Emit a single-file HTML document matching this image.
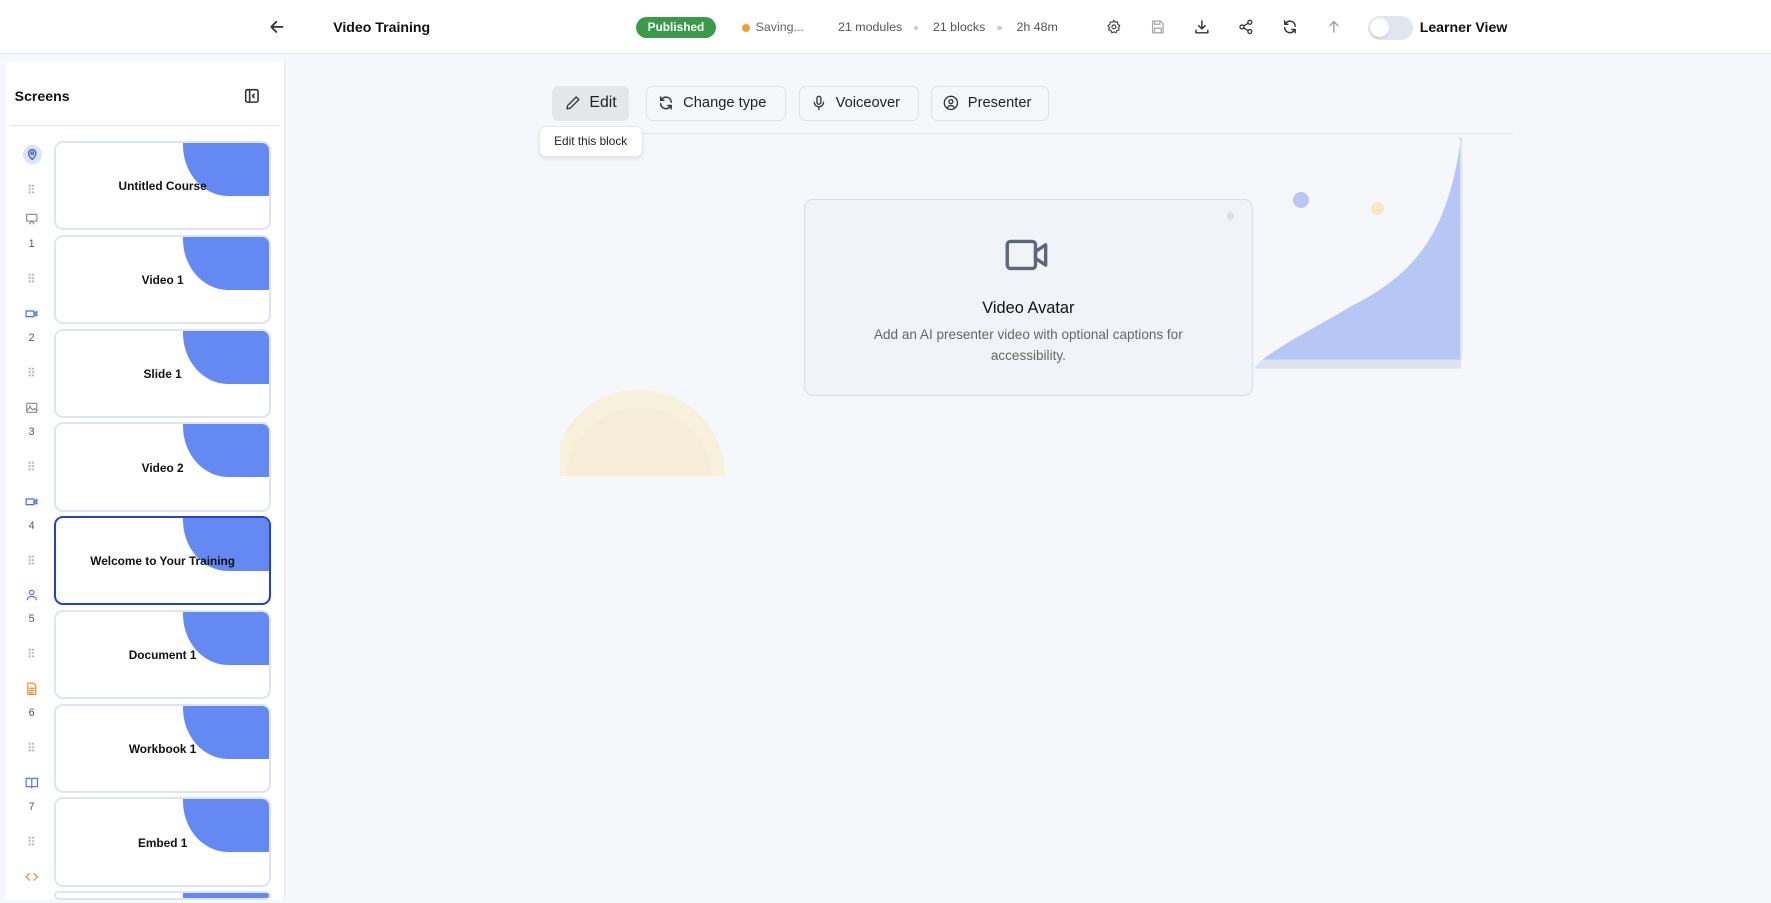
<!DOCTYPE html>
<html><head><meta charset="utf-8"><style>
*{box-sizing:border-box;margin:0;padding:0}
html,body{width:1771px;height:903px;overflow:hidden;background:#f5f7fa}
#w{position:relative;width:1568px;height:799px;overflow:hidden;zoom:1.12946;font-family:"Liberation Sans",sans-serif;color:#111;background:#f5f7fa}
.a{position:absolute}
.hdr{left:0;top:0;width:1568px;height:48px;background:#fff;border-bottom:1px solid #e3e6ec}
.t{white-space:nowrap}
.ic{fill:none;stroke-width:1.6;stroke-linecap:round;stroke-linejoin:round}
.card{left:48px;width:192px;height:79px;border:2px solid #dfe5f0;border-radius:8px;background:#fff;overflow:hidden}
.card .b{position:absolute;right:0;top:0;width:76px;height:47px;background:#6589f2;border-bottom-left-radius:40px 45px}
.card .n{position:absolute;left:0;right:0;top:32px;text-align:center;font-weight:bold;font-size:10.5px;color:#111}
.num{left:22px;width:12px;text-align:center;font-size:9.5px;color:#555}
.dots{left:25px;width:6px;height:9px;background:radial-gradient(circle,#bbb 0.9px,transparent 1.1px) 0 0/3px 3px}
.btn{top:76px;height:31px;border:1px solid #dde2ea;border-radius:6px;font-size:13px;display:flex;align-items:center;gap:8px;padding-left:10px;color:#222}
</style></head><body><div id="w">
<div class="a hdr"></div>
<svg class="a" style="left:238px;top:17px" width="14" height="14" viewBox="0 0 14 14"><path class="ic" style="stroke:#333" d="M12 7H2M6.5 2.5 2 7l4.5 4.5"/></svg>
<div class="a t" style="left:295px;top:17px;font-size:12.5px;font-weight:bold">Video Training</div>
<div class="a t" style="left:563px;top:15px;width:71px;height:19px;border-radius:10px;background:#3a9a4a;color:#fff;font-size:10.5px;font-weight:bold;text-align:center;line-height:19px">Published</div>
<div class="a" style="left:657px;top:21px;width:7px;height:7px;border-radius:50%;background:#f0a030"></div>
<div class="a t" style="left:669px;top:18px;font-size:11px;color:#666">Saving...</div>
<div class="a t" style="left:742px;top:18px;font-size:11px;color:#555">21 modules</div>
<div class="a" style="left:809px;top:23px;width:4px;height:4px;border-radius:50%;background:#ccc"></div>
<div class="a t" style="left:826px;top:18px;font-size:11px;color:#555">21 blocks</div>
<div class="a" style="left:883px;top:23px;width:4px;height:4px;border-radius:50%;background:#ccc"></div>
<div class="a t" style="left:900px;top:18px;font-size:11px;color:#555">2h 48m</div>
<svg class="a" style="left:979px;top:17px" width="14" height="14" viewBox="0 0 24 24"><path class="ic" style="stroke:#333" stroke-width="2" d="M12 2l2 3 3.5-.5.5 3.5 3 2-2 3 1 3.5-3.5 1L15 21l-3-1.5L9 21l-1.5-3.5-3.5-1 1-3.5-2-3 3-2 .5-3.5L10 5z"/><circle class="ic" style="stroke:#333" stroke-width="2" cx="12" cy="12" r="3"/></svg>
<svg class="a" style="left:1018px;top:17px" width="14" height="14" viewBox="0 0 24 24"><path class="ic" style="stroke:#aaa;stroke-width:2" d="M5 3h11l4 4v13a1 1 0 0 1-1 1H5a1 1 0 0 1-1-1V4a1 1 0 0 1 1-1zM7 3v5h8V3M7 21v-7h10v7"/></svg>
<svg class="a" style="left:1057px;top:17px" width="14" height="14" viewBox="0 0 24 24"><path class="ic" style="stroke:#333;stroke-width:2.2" d="M12 3v12M7 10l5 5 5-5M3 17v4h18v-4"/></svg>
<svg class="a" style="left:1096px;top:17px" width="14" height="14" viewBox="0 0 24 24"><g class="ic" style="stroke:#333;stroke-width:2"><circle cx="18" cy="5" r="3"/><circle cx="6" cy="12" r="3"/><circle cx="18" cy="19" r="3"/><path d="M8.6 13.5l6.8 4M15.4 6.5l-6.8 4"/></g></svg>
<svg class="a" style="left:1135px;top:17px" width="14" height="14" viewBox="0 0 24 24"><path class="ic" style="stroke:#333;stroke-width:2.2" d="M20 11a8 8 0 0 0-14-5L4 8M4 13a8 8 0 0 0 14 5l2-2M4 3v5h5M20 21v-5h-5"/></svg>
<svg class="a" style="left:1174px;top:17px" width="14" height="14" viewBox="0 0 24 24"><path class="ic" style="stroke:#999;stroke-width:2" d="M12 20V4M6 10l6-6 6 6"/></svg>
<div class="a" style="left:1211px;top:14px;width:40px;height:21px;border-radius:11px;background:#e2e6ee"></div>
<div class="a" style="left:1213px;top:16px;width:17px;height:17px;border-radius:50%;background:#fff;box-shadow:0 1px 2px rgba(0,0,0,.15)"></div>
<div class="a t" style="left:1257px;top:17px;font-size:12.5px;font-weight:bold">Learner View</div>

<div class="a" style="left:5px;top:55px;width:247px;height:742px;background:#fff;border-right:1px solid #e6e9ef"></div>
<div class="a t" style="left:13px;top:78px;font-size:12.5px;font-weight:bold">Screens</div>
<svg class="a" style="left:216px;top:78px" width="14" height="14" viewBox="0 0 14 14"><g class="ic" style="stroke:#333;stroke-width:1.4"><rect x="1.5" y="1.5" width="11" height="11" rx="1.5"/><path d="M5 1.5v11M9 5.5 7.5 7 9 8.5"/></g></svg>
<div class="a" style="left:9px;top:111px;width:238px;height:1px;background:#dfe4ee"></div>

<div class="a" style="left:20px;top:128px;width:17px;height:17px;border-radius:50%;background:#dbe3f7"></div>
<svg class="a" style="left:23px;top:131px" width="11" height="11" viewBox="0 0 24 24"><g class="ic" style="stroke:#3858d6;stroke-width:2.5"><path d="M12 22s7-6 7-12a7 7 0 0 0-14 0c0 6 7 12 7 12z"/><circle cx="12" cy="10" r="2.5"/></g></svg>
<svg class="a" style="left:22px;top:188px" width="12" height="12" viewBox="0 0 24 24"><path class="ic" style="stroke:#888;stroke-width:2" d="M3 4h18v12H3zM8 21l4-5 4 5"/></svg>
<svg class="a" style="left:22px;top:272px" width="12" height="12" viewBox="0 0 24 24"><path class="ic" style="stroke:#4a6cf0;stroke-width:2.2" d="M2 7h14v10H2zM16 12l5-4v8z"/></svg>
<svg class="a" style="left:22px;top:355px" width="12" height="12" viewBox="0 0 24 24"><g class="ic" style="stroke:#888;stroke-width:2"><rect x="3" y="4" width="18" height="16" rx="2"/><path d="M3 17l6-6 5 5 3-3 4 4"/></g><circle cx="9" cy="9" r="1.5" fill="#888"/></svg>
<svg class="a" style="left:22px;top:438px" width="12" height="12" viewBox="0 0 24 24"><path class="ic" style="stroke:#4a6cf0;stroke-width:2.2" d="M2 7h14v10H2zM16 12l5-4v8z"/></svg>
<svg class="a" style="left:22px;top:521px" width="12" height="12" viewBox="0 0 24 24"><g class="ic" style="stroke:#4a6cf0;stroke-width:2"><circle cx="12" cy="8" r="4"/><path d="M4 21c0-4 4-6 8-6s8 2 8 6"/></g></svg>
<svg class="a" style="left:22px;top:604px" width="12" height="12" viewBox="0 0 24 24"><path class="ic" style="stroke:#e8902a;stroke-width:2.2" d="M5 2h10l4 4v16H5zM8 11h8M8 15h8M8 19h6"/></svg>
<svg class="a" style="left:22px;top:687px" width="12" height="12" viewBox="0 0 24 24"><path class="ic" style="stroke:#4a6cf0;stroke-width:2" d="M2 4h7a3 3 0 0 1 3 3v14a2 2 0 0 0-2-2H2zM22 4h-7a3 3 0 0 0-3 3v14a2 2 0 0 1 2-2h8z"/></svg>
<svg class="a" style="left:22px;top:770px" width="12" height="12" viewBox="0 0 24 24"><path class="ic" style="stroke:#e8902a;stroke-width:2.2" d="M8 6l-6 6 6 6M16 6l6 6-6 6"/></svg>

<div class="a dots" style="top:163px"></div><div class="a dots" style="top:242px"></div><div class="a dots" style="top:325px"></div><div class="a dots" style="top:408px"></div><div class="a dots" style="top:491px"></div><div class="a dots" style="top:574px"></div><div class="a dots" style="top:657px"></div><div class="a dots" style="top:740px"></div>
<div class="a num" style="top:211px">1</div><div class="a num" style="top:294px">2</div><div class="a num" style="top:377px">3</div><div class="a num" style="top:460px">4</div><div class="a num" style="top:543px">5</div><div class="a num" style="top:626px">6</div><div class="a num" style="top:709px">7</div>

<div class="a card" style="top:125px"><div class="b"></div><div class="n">Untitled Course</div></div>
<div class="a card" style="top:208px"><div class="b"></div><div class="n">Video 1</div></div>
<div class="a card" style="top:291px"><div class="b"></div><div class="n">Slide 1</div></div>
<div class="a card" style="top:374px"><div class="b"></div><div class="n">Video 2</div></div>
<div class="a card" style="top:457px;border-color:#2340d0"><div class="b"></div><div class="n">Welcome to Your Training</div></div>
<div class="a card" style="top:540px"><div class="b"></div><div class="n">Document 1</div></div>
<div class="a card" style="top:623px"><div class="b"></div><div class="n">Workbook 1</div></div>
<div class="a card" style="top:706px"><div class="b"></div><div class="n">Embed 1</div></div>
<div class="a card" style="top:789px;height:8px"><div class="b"></div></div>

<div class="a btn" style="left:489px;width:68px;background:#e4e6ea;border-color:#e4e6ea;font-size:14px"><svg width="14" height="14" viewBox="0 0 24 24"><path class="ic" style="stroke:#333;stroke-width:2" d="M17 3l4 4L8 20l-5 1 1-5z"/></svg>Edit</div>
<div class="a btn" style="left:572px;width:124px"><svg width="14" height="14" viewBox="0 0 24 24"><path class="ic" style="stroke:#333;stroke-width:2.2" d="M20 11a8 8 0 0 0-14-5L4 8M4 13a8 8 0 0 0 14 5l2-2M4 3v5h5M20 21v-5h-5"/></svg>Change type</div>
<div class="a btn" style="left:707px;width:107px"><svg width="14" height="14" viewBox="0 0 24 24"><g class="ic" style="stroke:#333;stroke-width:2"><rect x="9" y="2" width="6" height="12" rx="3"/><path d="M5 11a7 7 0 0 0 14 0M12 18v4"/></g></svg>Voiceover</div>
<div class="a btn" style="left:824px;width:105px"><svg width="14" height="14" viewBox="0 0 24 24"><g class="ic" style="stroke:#333;stroke-width:2"><circle cx="12" cy="12" r="10"/><circle cx="12" cy="10" r="3"/><path d="M7 19c1-2 3-3 5-3s4 1 5 3"/></g></svg>Presenter</div>
<div class="a" style="left:557px;top:118px;width:783px;height:1px;background:#dfe3ea"></div>
<div class="a t" style="left:477px;top:112px;width:92px;height:27px;background:#fff;border:1px solid #e5e7eb;border-radius:6px;box-shadow:0 2px 4px rgba(0,0,0,.08);font-size:10.5px;text-align:center;line-height:25px;color:#222">Edit this block</div>

<svg class="a" style="left:496px;top:340px" width="150" height="81" viewBox="0 0 150 81"><circle cx="70" cy="81" r="76" fill="#f7f0da"/><circle cx="70" cy="86" r="65" fill="#f5edd7"/></svg>
<svg class="a" style="left:1108px;top:120px" width="190" height="210" viewBox="0 0 190 210"><path d="M2 206 L186 206 L186 198 L10 198z" fill="#dde3ee"/><path d="M186 2 C175 80 150 120 90 150 C60 168 35 180 10 198 L186 198z" fill="#b6c6f5"/><path d="M184 2 L186 2 L186 198" fill="none" stroke="#dde3ee" stroke-width="2"/></svg>
<div class="a" style="left:1145px;top:170px;width:14px;height:14px;border-radius:50%;background:#b8c7f4"></div>
<div class="a" style="left:1214px;top:179px;width:11px;height:11px;border-radius:50%;background:#f5e8cc"></div>

<div class="a" style="left:712px;top:176px;width:397px;height:175px;background:#f0f3f7;border:1px solid #d8dee8;border-radius:8px"></div>
<div class="a" style="left:1086px;top:188px;width:7px;height:7px;border-radius:50%;background:#dde2ea"></div>
<svg class="a" style="left:890px;top:211px" width="40" height="30" viewBox="0 0 40 30"><rect x="2" y="3" width="25" height="24" rx="3" fill="none" stroke="#5f6677" stroke-width="3"/><path d="M27 12l9-6v18l-9-6z" fill="none" stroke="#5f6677" stroke-width="3" stroke-linejoin="round"/></svg>
<div class="a t" style="left:712px;width:397px;top:265px;text-align:center;font-size:14.5px;color:#111">Video Avatar</div>
<div class="a" style="left:742px;width:337px;top:288px;text-align:center;font-size:12px;line-height:18px;color:#666">Add an AI presenter video with optional captions for accessibility.</div>
</div></body></html>
